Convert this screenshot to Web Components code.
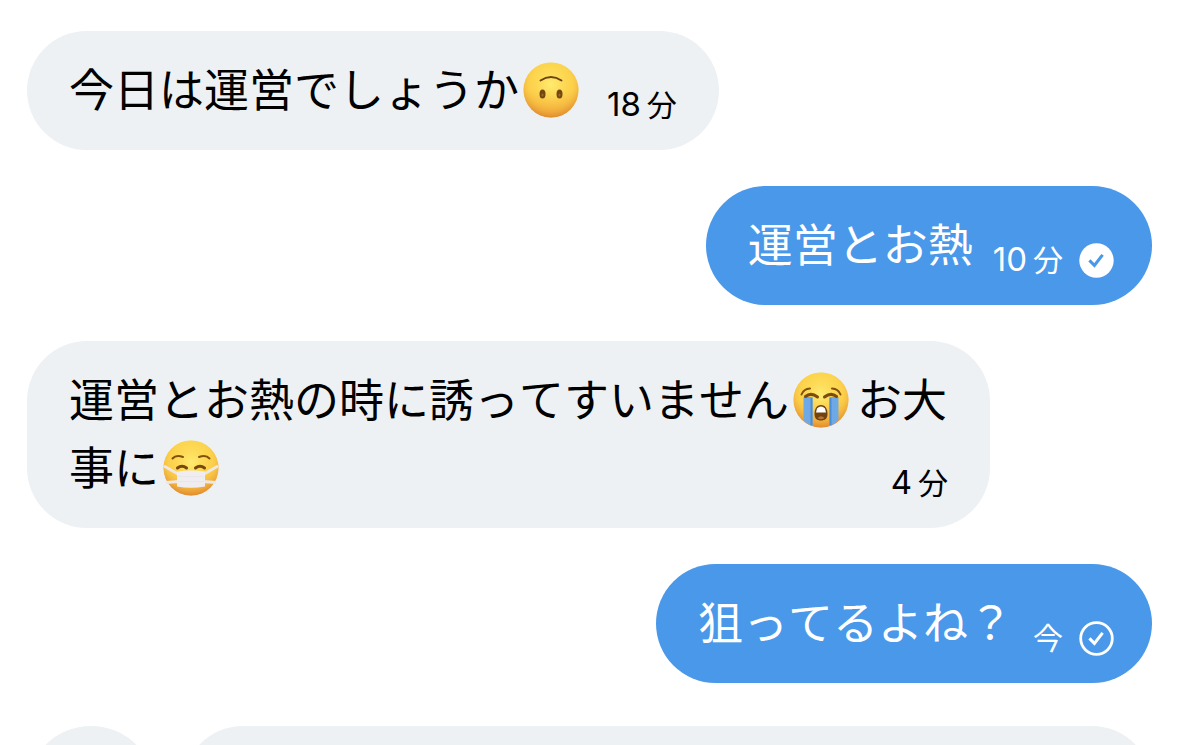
<!DOCTYPE html>
<html lang="ja">
<head>
<meta charset="utf-8">
<meta name="viewport" content="width=device-width, initial-scale=1">
<title>チャット</title>
<style>
  body {
    margin: 0;
    background: #fff;
    color: #000;
    font-family: "Noto Sans CJK JP", sans-serif;
    font-kerning: none;
  }
</style>
</head>
<body>
<chat-thread>
  <chat-message>今日は運営でしょうか<chat-emoji name="upside-down"></chat-emoji><message-time slot="meta" value="18" unit="分"></message-time></chat-message>
  <chat-message sent>運営とお熱<message-time slot="meta" value="10" unit="分"></message-time><read-check slot="meta" filled></read-check></chat-message>
  <chat-message>運営とお熱の時に誘ってすいません<chat-emoji name="crying"></chat-emoji>お大<wbr>事に<chat-emoji name="mask"></chat-emoji><message-time slot="meta" value="4" unit="分"></message-time></chat-message>
  <chat-message sent>狙ってるよね？<message-time slot="meta" unit="今"></message-time><read-check slot="meta"></read-check></chat-message>
  <chat-composer></chat-composer>
</chat-thread>

<script>
const define = (name, markup) => customElements.define(name, class extends HTMLElement {
  connectedCallback() {
    if (this.shadowRoot) return;
    const template = document.createElement('template');
    template.innerHTML = typeof markup === 'function' ? markup(this) : markup;
    this.attachShadow({ mode: 'open' }).append(template.content.cloneNode(true));
  }
});

define('chat-thread', `
  <style>
    :host {
      display: flex; flex-direction: column; gap: 36px;
      box-sizing: border-box; height: 100vh; overflow: hidden;
      padding: 31px 27px 0;
    }
    ::slotted(*) { flex: none; }
  </style>
  <slot></slot>`);

define('chat-message', `
  <style>
    :host { display: flex; --bubble: #edf1f3; }
    :host([sent]) { justify-content: flex-end; color: #fff; --bubble: #4a98ea; }
    .bubble {
      box-sizing: border-box; display: flow-root;
      max-width: calc(100% - 162px); padding: 23px 42px 28px;
      border-radius: 60px; background: var(--bubble);
      font-size: 45px; line-height: 68px;
    }
    :host([sent]) .bubble { padding-right: 38px; }
    .meta {
      float: right; display: flex; align-items: flex-end; gap: 16px;
      margin-left: 20px; padding-top: 28px; height: 40px;
    }
  </style>
  <div class="bubble"><slot></slot><span class="meta"><slot name="meta"></slot></span></div>`);

define('message-time', el => {
  const value = el.getAttribute('value');
  return `
  <style>
    :host { display: block; height: 40px; line-height: 42px; font-size: 30px; white-space: nowrap; }
    .value { font-family: Inter, sans-serif; font-size: 33px; margin-right: 6px; }
  </style>
  ${value ? `<span class="value">${value}</span>` : ''}<span>${el.getAttribute('unit')}</span>`;
});

define('read-check', el => {
  const filled = el.hasAttribute('filled');
  return `
  <style>
    :host { display: block; width: 35px; height: 34px; }
    svg { display: block; }
  </style>
  <svg width="35" height="35" viewBox="0 0 35 35" role="img" aria-label="${filled ? '既読' : '送信済み'}">
    <circle cx="17.5" cy="17.5" r="${filled ? 17.2 : 15.8}" fill="${filled ? '#fff' : 'none'}" stroke="${filled ? 'none' : '#fff'}" stroke-width="2.8"/>
    <path d="M10.4 17.4 15.4 22.4 23.6 11.8" fill="none" stroke="${filled ? '#4a98ea' : '#fff'}" stroke-width="3"/>
  </svg>`;
});

const faces = {
  'upside-down': ['逆さまの顔', `
    <path d="M17.500 18.500Q28 11.500 38.500 18.500" fill="none" stroke="#6f4411" stroke-width="2" stroke-linecap="round"/>
    <ellipse cx="19.500" cy="32" rx="3" ry="4.500" fill="#74470f"/><ellipse cx="36.500" cy="32" rx="3" ry="4.500" fill="#74470f"/>
    <ellipse cx="19.500" cy="33" rx="1" ry="1.500" fill="#99692a"/><ellipse cx="36.500" cy="33" rx="1" ry="1.500" fill="#99692a"/>`],
  crying: ['大泣きの顔', `
    <path d="M10.500 25H19.500V54Q14 52 10.500 48ZM36.500 25H45.500V48Q42 52 36.500 54Z" fill="#6ea9e6"/>
    <path d="M18.500 26V53M37.500 26V53" stroke="#4a8dd6" stroke-width="2"/>
    <path d="M8.500 22.500Q10.500 17 17 16.500M47.500 22.500Q45.500 17 39 16.500" fill="none" stroke="#81500f" stroke-width="2" stroke-linecap="round"/>
    <path d="M12.500 24.500Q18 20 24.500 25M43.500 24.500Q38 20 31.500 25" fill="none" stroke="#7b4c12" stroke-width="3" stroke-linecap="round"/>
    <path d="M28 33C32.500 33 34.500 37 34.500 42C34.500 46.500 32 48.500 28 48.500C24 48.500 21.500 46.500 21.500 42C21.500 37 23.500 33 28 33Z" fill="#70430f"/>
    <path d="M24 36.500Q28 32.500 32 36.500L33 40.500H23Z" fill="#fff"/>
    <path d="M24.500 46Q28 42.500 31.500 46Q28 48.500 24.500 46Z" fill="#b5733a"/>`],
  mask: ['マスクの顔', `
    <path d="M9.500 18.500Q13 14.500 20 17M36 17Q43 14.500 46.500 18.500" fill="none" stroke="#81500f" stroke-width="2" stroke-linecap="round"/>
    <path d="M14.500 28Q19 24.500 23.500 28M32.500 28Q37 24.500 41.500 28" fill="none" stroke="#77470f" stroke-width="3" stroke-linecap="round"/>
    <path d="M1 26 15 34M55 26 41 34M3 42.500 16 41.500M53 42.500 40 41.500" stroke="#eee8e4" stroke-width="2.800"/>
    <path d="M14 31.500Q28 29.500 42 31.500V46.500Q28 49 14 46.500Z" fill="#f0edf1"/>
    <path d="M15 36.500H41M15 41.500H41" stroke="#e9e6eb" stroke-width="1"/>`]
};

define('chat-emoji', el => {
  const [label, art] = faces[el.getAttribute('name')];
  return `
  <style>
    :host { display: inline-block; width: 56px; height: 56px; margin: 0 8px 0 4px; padding: 8px 0 4px; vertical-align: top; }
    svg { display: block; }
  </style>
  <svg width="56" height="56" viewBox="0 0 56 56" role="img" aria-label="${label}">
    <defs>
      <linearGradient id="skin" x1="0" y1="0" x2="0" y2="1">
        <stop offset="0" stop-color="#fbd04c"/><stop offset=".5" stop-color="#fbc743"/><stop offset="1" stop-color="#ec9733"/>
      </linearGradient>
      <radialGradient id="shine" cx=".5" cy=".4" r=".6">
        <stop offset="0" stop-color="#fff47c" stop-opacity=".8"/><stop offset=".65" stop-color="#ffdf55" stop-opacity=".35"/><stop offset="1" stop-color="#dd852a" stop-opacity=".7"/>
      </radialGradient>
    </defs>
    <circle cx="28" cy="28" r="27.500" fill="url(#skin)"/>
    <circle cx="28" cy="28" r="27.500" fill="url(#shine)"/>
    ${art}
  </svg>`;
});

define('chat-composer', `
  <style>
    :host { display: flex; gap: 28px; padding-top: 7px; }
    .round { width: 128px; height: 128px; border-radius: 50%; background: #edf1f3; }
    .field { flex: 1; height: 128px; border-radius: 60px; background: #edf1f3; }
  </style>
  <div class="round"></div><div class="field"></div>`);
</script>
</body>
</html>
